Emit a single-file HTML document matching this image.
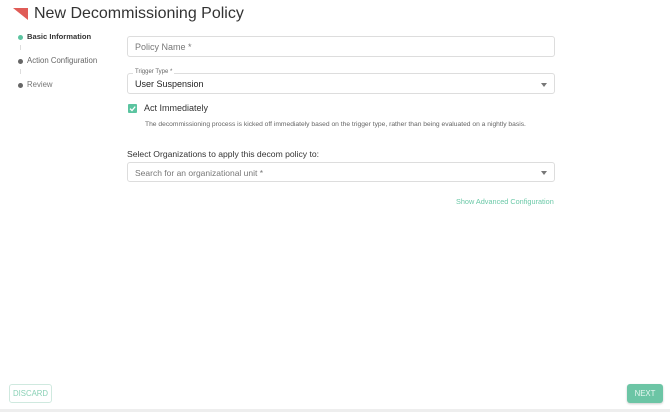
<!DOCTYPE html>
<html><head><style>
*{margin:0;padding:0;box-sizing:border-box}
body{width:670px;height:412px;background:#fff;font-family:"Liberation Sans",sans-serif;position:relative;overflow:hidden;color:#333}
.a{position:absolute}
.box{position:absolute;left:127px;width:428px;border:1px solid #ddd;border-radius:3px}
.caret{position:absolute;right:7px;width:0;height:0;border-left:3.5px solid transparent;border-right:3.5px solid transparent;border-top:4px solid #777}
</style></head><body>
<svg class="a" style="left:13px;top:8px" width="15" height="12"><polygon points="0,0 15,0 15,12" fill="#e05c57"/></svg>
<div class="a" style="left:34px;top:5px;font-size:16px;color:#333">New Decommissioning Policy</div>

<div class="a" style="left:18px;top:35px;width:5px;height:5px;border-radius:50%;background:#5bc4a0"></div>
<div class="a" style="left:27px;top:32px;font-size:7.6px;font-weight:bold;color:#333">Basic Information</div>
<div class="a" style="left:20px;top:45px;width:1px;height:5px;background:#ddd"></div>
<div class="a" style="left:18px;top:59px;width:5px;height:5px;border-radius:50%;background:#666"></div>
<div class="a" style="left:27px;top:56px;font-size:7.8px;color:#666">Action Configuration</div>
<div class="a" style="left:20px;top:69px;width:1px;height:5px;background:#ddd"></div>
<div class="a" style="left:18px;top:83px;width:5px;height:5px;border-radius:50%;background:#666"></div>
<div class="a" style="left:27px;top:80px;font-size:7.8px;color:#777">Review</div>

<div class="box" style="top:36px;height:21px"><span class="a" style="left:7px;top:5px;font-size:9px;color:#777">Policy Name *</span></div>
<div class="box" style="top:73px;height:21px"><span class="a" style="left:7px;top:5px;font-size:9px;color:#222">User Suspension</span><div class="caret" style="top:9px"></div></div>
<div class="a" style="left:133px;top:69px;font-size:6px;color:#666;background:#fff;padding:0 2px">Trigger Type *</div>

<div class="a" style="left:128px;top:104px;width:9px;height:9px;background:#5bc4a0;border-radius:1px"></div>
<svg class="a" style="left:128px;top:104px" width="9" height="9"><path d="M2 4.6 L4 6.5 L7.2 2.6" stroke="#fff" stroke-width="1.3" fill="none"/></svg>
<div class="a" style="left:144px;top:103px;font-size:9px;color:#333">Act Immediately</div>
<div class="a" style="left:145px;top:121px;font-size:6.7px;color:#666">The decommissioning process is kicked off immediately based on the trigger type, rather than being evaluated on a nightly basis.</div>

<div class="a" style="left:127px;top:149px;font-size:8.6px;color:#333">Select Organizations to apply this decom policy to:</div>
<div class="box" style="top:162px;height:20px"><span class="a" style="left:7px;top:5px;font-size:8.5px;color:#777">Search for an organizational unit *</span><div class="caret" style="top:8px"></div></div>
<div class="a" style="left:456px;top:197px;font-size:7.3px;color:#6cc9a8">Show Advanced Configuration</div>

<div class="a" style="left:9px;top:384px;width:43px;height:19px;border:1px solid #cfe9df;border-radius:3px;font-size:7.8px;color:#8ad1b6;text-align:center;line-height:17px">DISCARD</div>
<div class="a" style="left:627px;top:384px;width:36px;height:19px;background:#6cc5a5;border-radius:3px;font-size:7.8px;color:#e8f7f1;text-align:center;line-height:19px;box-shadow:0 1px 2px rgba(0,0,0,.2)">NEXT</div>
<div class="a" style="left:0;top:409px;width:670px;height:3px;background:#eee"></div>
</body></html>
